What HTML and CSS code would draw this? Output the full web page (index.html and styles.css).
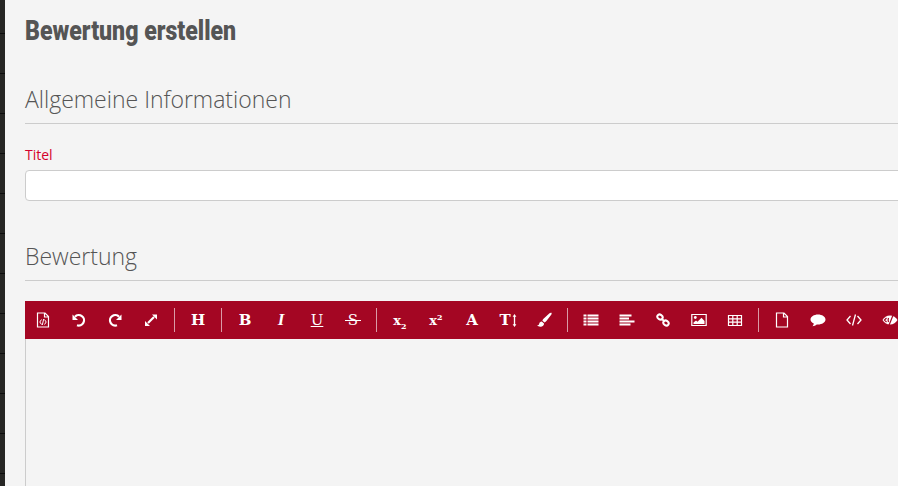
FILE: index.html
```html
<!DOCTYPE html>
<html lang="de">
<head>
  <meta charset="UTF-8" />
  <title>Bewertung erstellen</title>
  <link rel="stylesheet" href="styles.css">
</head>
<body>
  <div class="sidebar"></div>
  <div class="content">
    <h1>Bewertung erstellen</h1>

    <h2 class="first">Allgemeine Informationen</h2>
    <label for="title">Titel</label>
    <input type="text" id="title" />

    <h2>Bewertung</h2>
    <div class="editor">
      <div class="toolbar">
        <button class="tool"><svg viewBox="0 0 16 16"><path class="line" d="M2.500 1h7.500l3.500 3.500V15h-11z M9.500 1v4h4"/><path class="thin" d="M6.500 7.500 4.800 10l1.700 2.500M9.500 7.500l1.700 2.500-1.700 2.500M8.700 7 7.300 13"/></svg></button>
        <button class="tool"><svg viewBox="0 0 16 16"><path class="line thick" d="M4 4.800A5.200 5.200 0 1 1 6 13.200"/><path class="fill" d="M1.500 2.500v5.500H7z"/></svg></button>
        <button class="tool"><svg viewBox="0 0 16 16"><path class="line thick" d="M12 4.800A5.200 5.200 0 1 0 10 13.200"/><path class="fill" d="M14.500 2.500v5.500H9z"/></svg></button>
        <button class="tool"><svg viewBox="0 0 16 16"><path class="line thick" d="M5 11l6-6"/><path class="fill" d="M9 2.500h5v5zM2 9v5h5z"/></svg></button>
        <span class="sep"></span>
        <button class="tool txt">H</button>
        <span class="sep"></span>
        <button class="tool txt">B</button>
        <button class="tool txt ital">I</button>
        <button class="tool txt"><span class="under">U</span></button>
        <button class="tool txt"><span class="strike">S</span></button>
        <span class="sep"></span>
        <button class="tool txt small"><span>x<sub>2</sub></span></button>
        <button class="tool txt small"><span>x<sup>2</sup></span></button>
        <button class="tool txt">A</button>
        <button class="tool txt">T<svg class="updown" viewBox="0 0 5 16"><path class="fill" d="M2.500 1 4.500 4H3.200v8h1.300l-2 3-2-3h1.300V4H.500z"/></svg></button>
        <button class="tool"><svg viewBox="0 0 16 16"><path class="fill" d="M15.500 1c-.6-.5-1.400-.2-2 .3L7.500 6.800c-.6.6-1 1.300-1.100 2l2.200 1.600c.7-.3 1.300-.8 1.800-1.400l5-6.400c.3-.7.400-1.800.100-2.600z"/><path class="fill" d="M5.800 9.600c-1.500.1-2.300 1-2.600 2.200-.2 1-.9 1.500-2.200 1.500 1 1.300 3 1.800 4.800 1.200 1.500-.5 2.300-1.600 2.200-3z"/></svg></button>
        <span class="sep"></span>
        <button class="tool"><svg viewBox="0 0 16 16"><path class="fill" d="M.500 2.500h3v2h-3zM4.500 2.500h11v2h-11zM.500 5.500h3v2h-3zM4.500 5.500h11v2h-11zM.500 8.500h3v2h-3zM4.500 8.500h11v2h-11zM.500 11.500h3v2h-3zM4.500 11.500h11v2h-11z"/></svg></button>
        <button class="tool"><svg viewBox="0 0 16 16"><path class="fill" d="M.500 2.500h12v2h-12zM.500 5.500h9.500v2H.500zM.500 8.500h15v2h-15zM.500 11.500h11v2h-11z"/></svg></button>
        <button class="tool"><svg viewBox="0 0 16 16"><g class="line link"><ellipse cx="5" cy="5" rx="2.800" ry="2.300" transform="rotate(35 5 5)"/><ellipse cx="11" cy="11" rx="2.800" ry="2.300" transform="rotate(35 11 11)"/><path d="M6.500 6.800l3 2.400"/></g></svg></button>
        <button class="tool"><svg viewBox="0 0 16 16"><path class="line" d="M.800 2.500h14.400v11H.800z"/><circle class="fill" cx="4.300" cy="5.500" r="1.400"/><path class="fill" d="M2.500 12v-1.500l2.500-2 1.500 1.200 4-4 3 3.300v3z"/></svg></button>
        <button class="tool"><svg viewBox="0 0 16 16"><path class="line" d="M1.500 3.500h13v10h-13zM1.500 6.800h13M1.500 10.200h13M5.800 3.500v10M10.200 3.500v10"/></svg></button>
        <span class="sep"></span>
        <button class="tool"><svg viewBox="0 0 16 16"><path class="line" d="M2.500 1h7.500l3.500 3.500V15h-11z M9.500 1v4h4"/></svg></button>
        <button class="tool"><svg viewBox="0 0 16 16"><path class="fill" d="M8 2.500c4.100 0 7.500 2.200 7.500 5s-3.400 5-7.500 5l-1.300-.1C5.600 13.500 4 14 2.500 14.200c.7-.8 1.200-1.600 1.300-2.700C1.800 10.600.500 9.200.500 7.500c0-2.800 3.400-5 7.500-5z"/></svg></button>
        <button class="tool"><svg viewBox="0 0 16 16"><path class="line thin2" d="M4.500 4 1 8l3.500 4M11.500 4 15 8l-3.500 4M9.500 2.500l-3 11"/></svg></button>
        <button class="tool"><svg viewBox="0 0 16 16"><path class="fill" d="M8 3.500c3.300 0 6 2 7.500 4.500-1.500 2.500-4.200 4.500-7.500 4.500S2 10.500.500 8C2 5.500 4.700 3.500 8 3.500z"/><path class="cut" d="M4.500 6 2.500 8l2 2M6.500 6C6 7.300 6 8.700 6.500 10"/><path class="cut" d="M11.500 2 6.500 14.500"/></svg></button>
      </div>
      <div class="editor-body"></div>
    </div>
  </div>
</body>
</html>
```

FILE: styles.css
```css
* {
  box-sizing: border-box;
  margin: 0;
  padding: 0;
  font-family: 'Open Sans', sans-serif;
}
html, body {
  height: 100%;
  overflow: hidden;
}
body {
  display: flex;
  background: #f4f4f4;
}
.sidebar {
  flex: 0 0 5px;
  background: repeating-linear-gradient(to bottom, #262624 0, #262624 33px, #0c0c0c 33px, #0c0c0c 34px, #262624 34px, #262624 40px);
}
.content {
  flex: 0 0 1100px;
  padding: 15px 0 0 20px;
}
h1 {
  font-family: 'Roboto', sans-serif;
  font-size: 27px;
  line-height: 32px;
  font-weight: 900;
  color: #555;
  margin-bottom: 35px;
  transform: scaleX(0.855);
  transform-origin: left;
}
h2 {
  font-size: 23px;
  line-height: 34px;
  font-weight: 300;
  color: #555;
  padding-bottom: 7px;
  border-bottom: 1px solid #ccc;
  margin-bottom: 20px;
}
h2.first {
  margin-bottom: 22px;
}
label {
  display: block;
  font-size: 14px;
  line-height: 18px;
  color: #d4002c;
  margin-bottom: 6px;
}
input {
  display: block;
  width: 100%;
  height: 31px;
  background: white;
  border: 1px solid #ccc;
  border-radius: 4px;
  margin-bottom: 38px;
}
.toolbar {
  display: flex;
  align-items: center;
  height: 38px;
  background: #a40623;
}
.tool {
  flex: 0 0 36px;
  height: 38px;
  display: flex;
  align-items: center;
  justify-content: center;
  background: none;
  border: none;
  color: white;
}
.tool svg {
  width: 16px;
  height: 16px;
}
.txt {
  font-family: 'DejaVu Serif', serif;
  font-size: 15px;
  font-weight: 700;
}
.ital {
  font-family: 'Liberation Serif', serif;
  font-size: 17px;
  font-style: italic;
}
.under {
  text-decoration: underline;
  font-weight: 400;
}
.strike {
  position: relative;
  font-weight: 400;
}
.strike::after {
  content: "";
  position: absolute;
  left: -3px;
  right: -3px;
  top: 9px;
  height: 1px;
  background: white;
}
.under, .strike, .small span {
  font-family: inherit;
}
.small {
  font-size: 13px;
}
.small sub, .small sup {
  font-family: inherit;
  font-size: 8px;
  line-height: 0;
}
.tool .updown {
  width: 5px;
  height: 15px;
  margin-left: 1px;
}
.sep {
  flex: 0 0 1px;
  height: 24px;
  margin: 0 5px;
  background: rgba(255, 255, 255, 0.6);
}
.fill {
  fill: white;
}
.line {
  fill: none;
  stroke: white;
  stroke-width: 1.2;
}
.thick {
  stroke-width: 2.2;
}
.link {
  stroke-width: 2;
}
.thin {
  fill: none;
  stroke: white;
  stroke-width: 1;
}
.thin2 {
  stroke-width: 1.3;
}
.cut {
  fill: none;
  stroke: #a40623;
  stroke-width: 1.2;
}
.editor-body {
  height: 200px;
  border-left: 1px solid #ccc;
}
```
